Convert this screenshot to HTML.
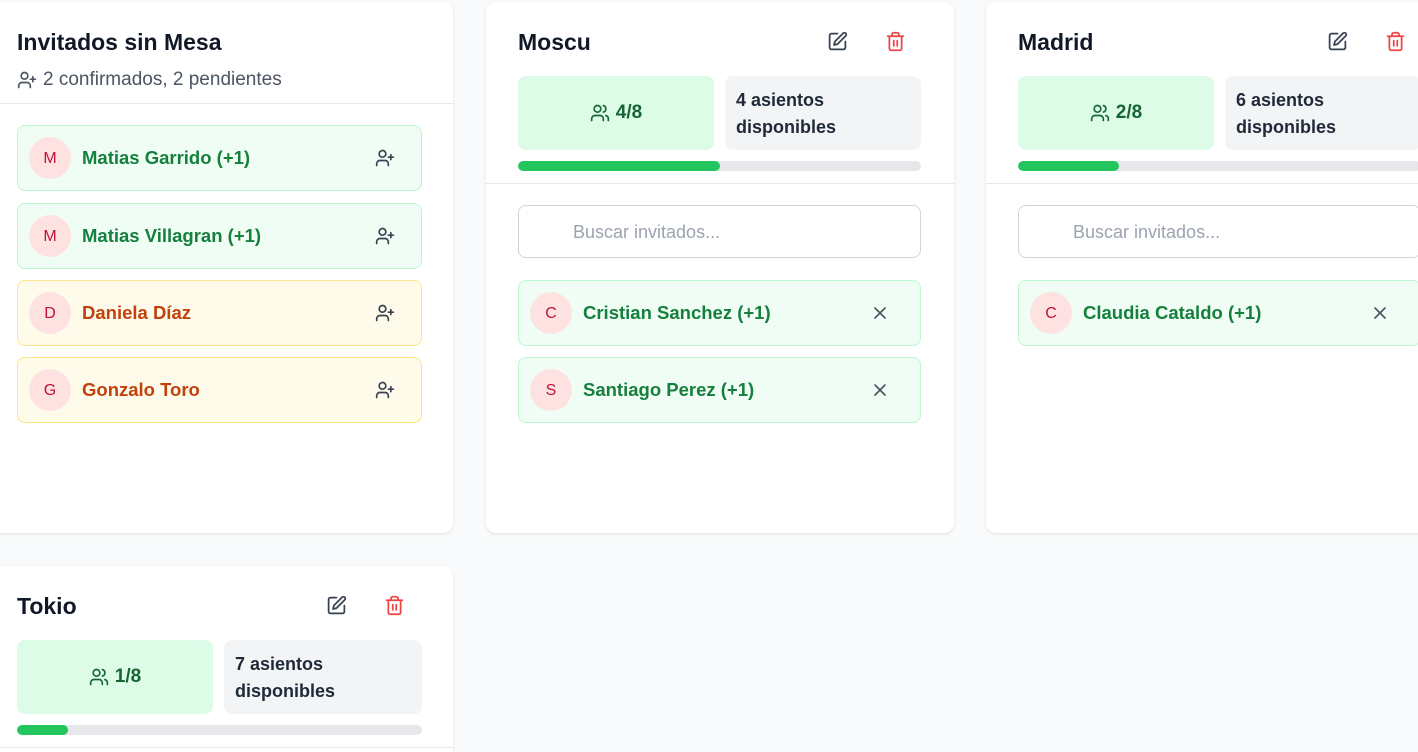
<!DOCTYPE html>
<html style="width:1418px;height:752px;overflow:hidden"><head><meta charset="utf-8"><style>
*{box-sizing:border-box;margin:0;padding:0}
body{width:1418px;height:752px;background:#f9fafb;font-family:"Liberation Sans",Arial,sans-serif;position:relative;overflow:hidden;color:#111827}
.card{position:absolute;background:#fff;border-radius:10px;box-shadow:0 1px 3px rgba(0,0,0,.08),0 1px 2px rgba(0,0,0,.04)}
.a{position:absolute}
.title{font-size:23px;font-weight:700;color:#111827;line-height:28px}
.sub{font-size:19px;color:#4b5563;line-height:22px;display:flex;align-items:center;gap:6px}
.div{position:absolute;left:0;right:0;height:1px;background:#e5e7eb}
.row{position:absolute;height:66px;border-radius:8px;border:1px solid #bbf7d0;background:#f0fdf4;display:flex;align-items:center;padding-left:11px}
.row.y{border-color:#fde68a;background:#fffbeb}
.av{width:42px;height:42px;border-radius:50%;background:#fee2e2;color:#be123c;font-size:16px;display:flex;align-items:center;justify-content:center;margin-right:11px;padding-top:2px}
.nm{font-size:18.5px;font-weight:700;color:#15803d}
.y .nm{color:#c2410c}
.ic{position:absolute;right:26px;top:22px}
.stat{position:absolute;height:74px;border-radius:8px}
.g{background:#dcfce7;color:#166534;font-size:19px;font-weight:700;display:flex;align-items:center;justify-content:center;gap:6px}
.gr{background:#f3f4f6;color:#1f2937;font-size:18px;font-weight:700;line-height:27px;padding:11px 0 0 11px}
.bar{position:absolute;height:10px;border-radius:5px;background:#e5e7eb;overflow:hidden}
.bar i{display:block;height:100%;background:#22c55e;border-radius:5px}
.search{position:absolute;height:53px;border:1px solid #d1d5db;border-radius:8px;font-size:18px;color:#9ca3af;padding:16px 0 0 54px}
</style></head><body>
<svg width="0" height="0" style="position:absolute"><defs>
<symbol id="up" viewBox="0 0 24 24"><g fill="none" stroke="currentColor" stroke-width="2" stroke-linecap="round" stroke-linejoin="round"><path d="M16 21v-2a4 4 0 0 0-4-4H6a4 4 0 0 0-4 4v2"/><circle cx="9" cy="7" r="4"/><path d="M19 8v6M22 11h-6"/></g></symbol>
<symbol id="us" viewBox="0 0 24 24"><g fill="none" stroke="currentColor" stroke-width="2" stroke-linecap="round" stroke-linejoin="round"><path d="M16 21v-2a4 4 0 0 0-4-4H6a4 4 0 0 0-4 4v2"/><circle cx="9" cy="7" r="4"/><path d="M22 21v-2a4 4 0 0 0-3-3.87M16 3.13a4 4 0 0 1 0 7.75"/></g></symbol>
<symbol id="ed" viewBox="0 0 24 24"><g fill="none" stroke="currentColor" stroke-width="2" stroke-linecap="round" stroke-linejoin="round"><path d="M12 3H5a2 2 0 0 0-2 2v14a2 2 0 0 0 2 2h14a2 2 0 0 0 2-2v-7"/><path d="M18.4 2.6a2.1 2.1 0 0 1 3 3L12 15l-4 1 1-4z"/></g></symbol>
<symbol id="tr" viewBox="0 0 24 24"><g fill="none" stroke="currentColor" stroke-width="2" stroke-linecap="round" stroke-linejoin="round"><path d="M3 6h18M19 6v14a2 2 0 0 1-2 2H7a2 2 0 0 1-2-2V6M8 6V4a2 2 0 0 1 2-2h4a2 2 0 0 1 2 2v2M10 11v6M14 11v6"/></g></symbol>
<symbol id="x" viewBox="0 0 24 24"><path d="M18 6 6 18M6 6l12 12" fill="none" stroke="currentColor" stroke-width="2" stroke-linecap="round"/></symbol>
</defs></svg>

<div class="card" style="left:-15px;top:2px;width:468px;height:531px">
 <div class="a title" style="left:32px;top:26px">Invitados sin Mesa</div>
 <div class="a sub" style="left:32px;top:67px"><svg width="20" height="20" style="color:#4b5563"><use href="#up"/></svg>2 confirmados, 2 pendientes</div>
 <div class="div" style="top:101px"></div>
 <div class="row" style="left:32px;top:123px;width:405px"><div class="av">M</div><div class="nm">Matias Garrido (+1)</div><svg class="ic" width="20" height="20" style="color:#374151"><use href="#up"/></svg></div>
 <div class="row" style="left:32px;top:201px;width:405px"><div class="av">M</div><div class="nm">Matias Villagran (+1)</div><svg class="ic" width="20" height="20" style="color:#374151"><use href="#up"/></svg></div>
 <div class="row y" style="left:32px;top:278px;width:405px"><div class="av">D</div><div class="nm">Daniela Díaz</div><svg class="ic" width="20" height="20" style="color:#374151"><use href="#up"/></svg></div>
 <div class="row y" style="left:32px;top:355px;width:405px"><div class="av">G</div><div class="nm">Gonzalo Toro</div><svg class="ic" width="20" height="20" style="color:#374151"><use href="#up"/></svg></div>
</div>

<div class="card" style="left:486px;top:2px;width:468px;height:531px">
 <div class="a title" style="left:32px;top:26px">Moscu</div>
 <svg class="a" style="left:341px;top:29px;color:#374151" width="21" height="21"><use href="#ed"/></svg>
 <svg class="a" style="left:399px;top:29px;color:#ef4444" width="21" height="21"><use href="#tr"/></svg>
 <div class="stat g" style="left:32px;top:74px;width:196px"><svg width="20" height="20"><use href="#us"/></svg>4/8</div>
 <div class="stat gr" style="left:239px;top:74px;width:196px">4 asientos<br>disponibles</div>
 <div class="bar" style="left:32px;top:159px;width:403px"><i style="width:50%"></i></div>
 <div class="div" style="top:181px"></div>
 <div class="search" style="left:32px;top:203px;width:403px">Buscar invitados...</div>
 <div class="row" style="left:32px;top:278px;width:403px"><div class="av">C</div><div class="nm">Cristian Sanchez (+1)</div><svg class="ic" style="right:30px;color:#4b5563" width="20" height="20"><use href="#x"/></svg></div>
 <div class="row" style="left:32px;top:355px;width:403px"><div class="av">S</div><div class="nm">Santiago Perez (+1)</div><svg class="ic" style="right:30px;color:#4b5563" width="20" height="20"><use href="#x"/></svg></div>
</div>

<div class="card" style="left:986px;top:2px;width:468px;height:531px">
 <div class="a title" style="left:32px;top:26px">Madrid</div>
 <svg class="a" style="left:341px;top:29px;color:#374151" width="21" height="21"><use href="#ed"/></svg>
 <svg class="a" style="left:399px;top:29px;color:#ef4444" width="21" height="21"><use href="#tr"/></svg>
 <div class="stat g" style="left:32px;top:74px;width:196px"><svg width="20" height="20"><use href="#us"/></svg>2/8</div>
 <div class="stat gr" style="left:239px;top:74px;width:196px">6 asientos<br>disponibles</div>
 <div class="bar" style="left:32px;top:159px;width:403px"><i style="width:25%"></i></div>
 <div class="div" style="top:181px"></div>
 <div class="search" style="left:32px;top:203px;width:403px">Buscar invitados...</div>
 <div class="row" style="left:32px;top:278px;width:403px"><div class="av">C</div><div class="nm">Claudia Cataldo (+1)</div><svg class="ic" style="right:30px;color:#4b5563" width="20" height="20"><use href="#x"/></svg></div>
</div>

<div class="card" style="left:-15px;top:566px;width:468px;height:186px;border-radius:10px 10px 0 0">
 <div class="a title" style="left:32px;top:26px">Tokio</div>
 <svg class="a" style="left:341px;top:29px;color:#374151" width="21" height="21"><use href="#ed"/></svg>
 <svg class="a" style="left:399px;top:29px;color:#ef4444" width="21" height="21"><use href="#tr"/></svg>
 <div class="stat g" style="left:32px;top:74px;width:196px"><svg width="20" height="20"><use href="#us"/></svg>1/8</div>
 <div class="stat gr" style="left:239px;top:74px;width:198px">7 asientos<br>disponibles</div>
 <div class="bar" style="left:32px;top:159px;width:405px"><i style="width:12.5%"></i></div>
 <div class="div" style="top:181px"></div>
</div>
</body></html>
